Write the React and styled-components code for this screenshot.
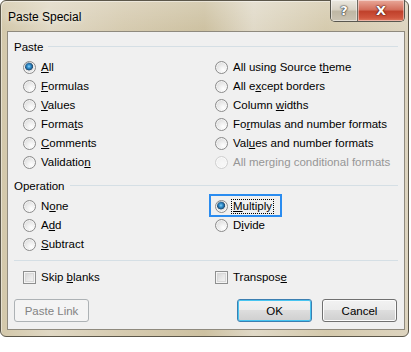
import React from "react";
import styled, { createGlobalStyle } from "styled-components";

const GlobalStyle = createGlobalStyle`
  body {
    margin: 0;
    background: #ffffff;
    font-family: "Segoe UI", "Liberation Sans", Arial, sans-serif;
  }
`;

const pasteLeft = [
  { label: "All", key: 0, checked: true },
  { label: "Formulas", key: 0 },
  { label: "Values", key: 0 },
  { label: "Formats", key: 5 },
  { label: "Comments", key: 0 },
  { label: "Validation", key: 9 },
];

const pasteRight = [
  { label: "All using Source theme", key: 18 },
  { label: "All except borders", key: 5 },
  { label: "Column widths", key: 7 },
  { label: "Formulas and number formats", key: 2 },
  { label: "Values and number formats", key: 3 },
  { label: "All merging conditional formats", key: -1, disabled: true },
];

function Label({ text, accel }) {
  if (accel < 0) return <span>{text}</span>;
  return (
    <span>
      {text.slice(0, accel)}
      <u>{text[accel]}</u>
      {text.slice(accel + 1)}
    </span>
  );
}

function Option({ item, focused }) {
  return (
    <Item $disabled={item.disabled} $focused={focused}>
      <Radio $checked={item.checked} $disabled={item.disabled} />
      <Text $focused={focused}>
        <Label text={item.label} accel={item.key} />
      </Text>
    </Item>
  );
}

export default function App() {
  return (
    <>
      <GlobalStyle />
      <Window>
        <TitleBar>
          <Title>Paste Special</Title>
          <Caption>
            <HelpButton>?</HelpButton>
            <CloseButton>X</CloseButton>
          </Caption>
        </TitleBar>
        <Client>
          <Header>
            <span>Paste</span>
            <Rule />
          </Header>
          <Options>
            <Column>
              {pasteLeft.map((o) => (
                <Option key={o.label} item={o} />
              ))}
            </Column>
            <Column>
              {pasteRight.map((o) => (
                <Option key={o.label} item={o} />
              ))}
            </Column>
          </Options>

          <Header $top={5}>
            <span>Operation</span>
            <Rule />
          </Header>
          <Options>
            <Column>
              <Option item={{ label: "None", key: 1 }} />
              <Option item={{ label: "Add", key: 1 }} />
              <Option item={{ label: "Subtract", key: 0 }} />
            </Column>
            <Column>
              <Option item={{ label: "Multiply", key: 0, checked: true }} focused />
              <Option item={{ label: "Divide", key: 1 }} />
            </Column>
          </Options>

          <Separator />

          <Options>
            <Column>
              <Item>
                <Check />
                <Text>
                  <Label text="Skip blanks" accel={5} />
                </Text>
              </Item>
            </Column>
            <Column>
              <Item>
                <Check />
                <Text>
                  <Label text="Transpose" accel={8} />
                </Text>
              </Item>
            </Column>
          </Options>

          <Buttons>
            <Button $disabled>Paste Link</Button>
            <Spacer />
            <Button $default>OK</Button>
            <Button>Cancel</Button>
          </Buttons>
        </Client>
      </Window>
    </>
  );
}

const Window = styled.div`
  box-sizing: border-box;
  width: 409px;
  height: 337px;
  border: 1px solid #5c574a;
  border-radius: 6px;
  padding: 0 3px 6px 6px;
  display: flex;
  flex-direction: column;
  background:
    linear-gradient(180deg, rgba(255, 255, 255, 0.2), rgba(255, 255, 255, 0) 30px),
    linear-gradient(
      90deg,
      #d3c8aa 0%,
      #e0d8c4 12%,
      #d6cbb0 30%,
      #cdc1a1 50%,
      #e0d9c7 62%,
      #d5caad 80%,
      #ddd4bf 100%
    );
  box-shadow: inset 1px 1px 0 rgba(255, 255, 255, 0.45);
`;

const TitleBar = styled.div`
  height: 30px;
  display: flex;
  align-items: flex-start;
`;

const Title = styled.div`
  margin: 9px 0 0 1px;
  font-size: 12px;
  color: #000;
  text-shadow: 0 0 6px rgba(255, 255, 255, 0.9);
`;

const Caption = styled.div`
  margin-left: auto;
  margin-top: -1px;
  display: flex;
  height: 21px;
  border: 1px solid #59574f;
  border-top: none;
  border-radius: 0 0 5px 5px;
  overflow: hidden;
`;

const CaptionButton = styled.div`
  display: flex;
  align-items: center;
  justify-content: center;
  font-family: "DejaVu Sans", sans-serif;
  font-weight: bold;
  color: #fff;
  box-shadow: inset 0 0 0 1px rgba(255, 255, 255, 0.45);
`;

const HelpButton = styled(CaptionButton)`
  width: 26px;
  font-size: 13px;
  text-shadow: 0 0 1px #333, 0 0 1px #333, 0 0 2px #444;
  background: linear-gradient(180deg, #ebe8e0 0%, #d8d2c4 45%, #bfb7a4 55%, #cbc4b3 100%);
  border-right: 1px solid #6e6a60;
`;

const CloseButton = styled(CaptionButton)`
  width: 46px;
  font-size: 13px;
  text-shadow: 0 0 1px #4a150c, 0 0 1px #4a150c, 0 0 2px #5a1a0e;
  background: linear-gradient(180deg, #e9a99a 0%, #d4705d 45%, #c0412b 55%, #d0563e 85%, #e07b60 100%);
`;

const Client = styled.div`
  box-sizing: border-box;
  flex: 1;
  border: 1px solid #8f8a7e;
  background: #f0f0f0;
  padding: 6px 6px 0 6px;
  font-size: 11.5px;
  color: #000;
  display: flex;
  flex-direction: column;
`;

const Header = styled.div`
  display: flex;
  align-items: center;
  gap: 5px;
  height: 17px;
  margin-top: ${(p) => p.$top || 0}px;
`;

const Rule = styled.div`
  flex: 1;
  height: 1px;
  background: #d5dfe5;
`;

const Options = styled.div`
  display: grid;
  grid-template-columns: 192px 1fr;
  padding-left: 9px;
  margin-top: 3px;
`;

const Column = styled.div`
  display: flex;
  flex-direction: column;
`;

const Item = styled.div`
  position: relative;
  display: flex;
  align-items: center;
  gap: 4px;
  height: 19px;
  color: ${(p) => (p.$disabled ? "#969696" : "#000")};
  ${(p) =>
    p.$focused &&
    `
    &::before {
      content: "";
      position: absolute;
      left: -6px;
      top: -3px;
      width: 69px;
      height: 19px;
      border: 2px solid #2a8cf0;
    }
  `}
`;

const Radio = styled.span`
  box-sizing: border-box;
  flex: none;
  width: 13px;
  height: 13px;
  border-radius: 50%;
  border: 1px solid ${(p) => (p.$disabled ? "#cfcfcf" : "#8b8b8b")};
  background: ${(p) =>
    p.$checked
      ? "radial-gradient(circle at 45% 40%, #8fd3f7 0, #3a9ad8 1.5px, #1e5f92 3.2px, #2b4e6c 3.8px, #e2e2e2 4.3px, #fafafa 100%)"
      : p.$disabled
      ? "radial-gradient(circle at 60% 65%, #f8f8f8 0, #ededed 100%)"
      : "radial-gradient(circle at 65% 70%, #ffffff 0, #f2f2f2 30%, #d2d2d2 100%)"};
  box-shadow: inset 0 0 0 1px rgba(255, 255, 255, 0.6);
`;

const Text = styled.span`
  line-height: 13px;
  padding: 0 1px;
  outline: ${(p) => (p.$focused ? "1px dotted #000" : "none")};
  outline-offset: 0;
`;

const Check = styled.span`
  box-sizing: border-box;
  flex: none;
  width: 13px;
  height: 13px;
  border: 1px solid #8e8f8f;
  background: linear-gradient(135deg, #cfcfcf 0%, #e9e9e9 55%, #f6f6f6 100%);
  box-shadow: inset 0 0 0 1px #f4f4f4, inset 0 0 0 2px #d8d8d8;
`;

const Separator = styled.div`
  height: 1px;
  background: #d5dfe5;
  margin: 6px 0 4px;
`;

const Buttons = styled.div`
  display: flex;
  gap: 10px;
  margin-top: 12px;
  padding-right: 1px;
`;

const Spacer = styled.div`
  flex: 1;
`;

const Button = styled.div`
  box-sizing: border-box;
  width: 75px;
  height: 23px;
  border-radius: 3px;
  display: flex;
  align-items: center;
  justify-content: center;
  border: 1px solid ${(p) => (p.$disabled ? "#adb2b5" : p.$default ? "#3c7fb1" : "#707070")};
  color: ${(p) => (p.$disabled ? "#838383" : "#000")};
  background: ${(p) =>
    p.$disabled
      ? "#f4f4f4"
      : "linear-gradient(180deg, #f2f2f2 0%, #ebebeb 50%, #dddddd 50%, #cfcfcf 100%)"};
  box-shadow: inset 0 0 0 1px
    ${(p) => (p.$disabled ? "#f4f4f4" : p.$default ? "#48c5f1" : "#fcfcfc")};
`;
